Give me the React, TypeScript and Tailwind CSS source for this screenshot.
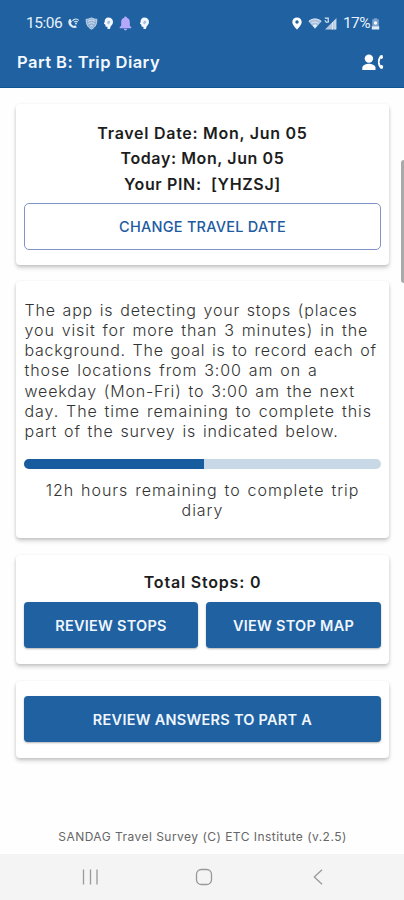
import React from "react";
import { clsx } from "clsx";

const introLines = [
  { text: "The app is detecting your stops (places", tracking: "tracking-[0.8px]" },
  { text: "you visit for more than 3 minutes) in the", tracking: "tracking-[0.91px]" },
  { text: "background. The goal is to record each of", tracking: "tracking-[0.74px]" },
  { text: "those locations from 3:00 am on a", tracking: "tracking-[0.92px]" },
  { text: "weekday (Mon-Fri) to 3:00 am the next", tracking: "tracking-[0.85px]" },
  { text: "day. The time remaining to complete this", tracking: "tracking-[0.93px]" },
  { text: "part of the survey is indicated below.", tracking: "tracking-[0.84px]" },
];

function CallIcon() {
  return (
    <svg width="13" height="13" viewBox="0 0 13 13" fill="none">
      <path
        d="M2.3 2.2C.7 4 1.1 7 3 9c2 2 5 2.5 7 1.3L8.3 8.3 6.9 9C5.5 8.5 4.5 7.5 4 6l.9-1.3L3.5 2z"
        fill="#dfebf9"
      />
      <path d="M5.5 3.8c1.8-2.4 5-2.3 6.2-.3M7.3 5.2c1-1.2 2.5-1.2 3.3-.1" stroke="#dfebf9" strokeWidth="1.1" />
      <circle cx="9" cy="6.5" r=".9" fill="#dfebf9" />
    </svg>
  );
}

function ShieldIcon() {
  return (
    <svg width="13" height="13" viewBox="0 0 13 13" fill="none" stroke="#c5d8ec">
      <path d="M6.5.8C8.5 2 10 2.3 11.8 2.2c.2 4.5-1.3 8-5.3 10-4-2-5.5-5.5-5.3-10C3 2.3 4.5 2 6.5.8Z" fill="#8fb0d4" />
      <path d="M3 4.5c2-1.5 5-1.5 7 0M3.5 7c2-1.8 4-1.8 6 0M5 9.3c1-1 2-1 3 0" strokeWidth="1.1" />
    </svg>
  );
}

function HeadIcon() {
  return (
    <svg width="11" height="13" viewBox="0 0 11 13">
      <path
        d="M5.3.6C8 .6 10 2.3 10 4.900c0 2-1 2.900-2.100 4L6.800 12H4.500l-.1-2.200H2.700L2.200 7.400.9 6.800l.7-1.900C1.600 2.300 3 .6 5.300.6Z"
        fill="#f4f9ff"
      />
      <path d="M4.300 4.800 5.800 3.400l1.600 1.200-.8 1.700-1.200 1.300L4.300 6.500z" fill="#a5c0de" />
    </svg>
  );
}

function BellIcon() {
  return (
    <svg width="13" height="15" viewBox="0 0 13 15" fill="#b4a8fb">
      <path d="M6.5.4c.9 0 1.4.6 1.4 1.4 2 .6 2.900 2.200 2.900 4.200v3.400l1.600 2v.9H.6v-.9l1.600-2V6c0-2 .9-3.600 2.900-4.200C5.100 1 5.600.4 6.500.4Z" />
      <path d="M4.800 12.800h3.400c-.2 1-.8 1.600-1.700 1.600s-1.500-.6-1.700-1.600Z" />
    </svg>
  );
}

function PinIcon() {
  return (
    <svg width="10" height="13" viewBox="0 0 10 13">
      <path
        d="M5 .4C2.300.4.3 2.400.3 5c0 3 4.700 7.600 4.700 7.600S9.700 8 9.700 5C9.700 2.400 7.700.4 5 .4Zm0 2.900a1.700 1.700 0 1 1 0 3.400 1.700 1.700 0 0 1 0-3.400Z"
        fill="#fff"
        fillRule="evenodd"
      />
    </svg>
  );
}

function WifiIcon() {
  return (
    <svg width="14" height="11" viewBox="0 0 14 11">
      <path d="M7 .4C4.200.4 1.900 1.500.3 3.200L7 10.800l6.700-7.600C12.100 1.500 9.800.4 7 .4Z" fill="#a9c0dd" />
      <path d="M1 3.300c3.500-3 8.500-3 12 0M3.300 5.400c2.200-1.900 5.200-1.900 7.400 0" stroke="#dbe7f5" strokeWidth="1" fill="none" />
      <path d="M7 6.600c-1 0-1.700.4-2.200 1L7 10.300l2.200-2.700c-.5-.6-1.200-1-2.200-1Z" fill="#e4eefa" />
    </svg>
  );
}

function SignalIcon() {
  return (
    <svg width="13" height="13" viewBox="0 0 13 13">
      <path d="M12.500 1v11.500H1z" fill="#b4c8e0" />
      <path d="M8.500 5v7.500M11 3v9.500" stroke="#d9e5f3" strokeWidth="1" />
      <path d="M.8 1.100h3.400v3.600M.8 3.400l1.700 1.900 2.600-.6" stroke="#d9e5f3" strokeWidth="1.2" fill="none" />
    </svg>
  );
}

function BatteryIcon() {
  return (
    <svg width="9" height="12" viewBox="0 0 9 12">
      <path d="M3 .3h3v1h1.800v7H1.200v-7H3z" fill="#7da2cc" />
      <circle cx="4.500" cy="5" r="1.700" fill="#f4f8fd" />
      <path d="M.8 8.200h7.400v3.300H.8z" fill="#e3edf8" />
    </svg>
  );
}

function ContactIcon() {
  return (
    <svg width="22" height="17" viewBox="0 0 22 17" fill="#fff">
      <circle cx="6.900" cy="4.600" r="4.200" />
      <path d="M.3 16.100v-2.300c0-2.800 4.400-4 6.600-4s6.600 1.200 6.600 4v2.300z" />
      <path d="M20.600 1.300 18.900 1c-1.900 1.600-3 4.100-3 6.900s1.100 5.400 3 7l1.900-.4.4-2.700-1.700-.9-1 .4a7 7 0 0 1 0-6.700l1 .4 1.600-.9z" />
    </svg>
  );
}

function StatusBar() {
  return (
    <div className="flex h-[47px] items-center pl-[26px] pr-[24px] font-['Roboto',sans-serif] text-[15.5px] text-[#e8f1fb]">
      <span className="w-[41px] tracking-[-0.5px]">15:06</span>
      <div className="flex items-center">
        <span className="w-[18px]"><CallIcon /></span>
        <span className="w-[18px]"><ShieldIcon /></span>
        <span className="w-[15.5px]"><HeadIcon /></span>
        <span className="w-5"><BellIcon /></span>
        <span><HeadIcon /></span>
      </div>
      <div className="ml-auto flex items-center">
        <span className="w-4"><PinIcon /></span>
        <span className="w-[15.5px]"><WifiIcon /></span>
        <span className="w-[19.5px]"><SignalIcon /></span>
        <span className="w-[28px] tracking-[-0.6px]">17%</span>
        <BatteryIcon />
      </div>
    </div>
  );
}

function Card({ className, children }: { className?: string; children: React.ReactNode }) {
  return (
    <section
      className={clsx(
        "rounded-[4px] bg-white px-2 shadow-[0_3px_4px_rgba(0,0,0,0.16),0_1px_3px_rgba(0,0,0,0.12)]",
        className,
      )}
    >
      {children}
    </section>
  );
}

function PrimaryButton({ className, children }: { className?: string; children: React.ReactNode }) {
  return (
    <button
      className={clsx(
        "h-[46px] rounded-[4px] bg-[#1f61a1] pt-[2px] text-[14.5px] font-semibold tracking-[0.26px] text-[#eff6ff] shadow-[0_1px_2px_rgba(0,0,0,0.3)]",
        className,
      )}
    >
      {children}
    </button>
  );
}

function NavBar() {
  return (
    <nav className="flex h-[46px] items-center bg-[#f4f4f4] pl-[82px]">
      <svg width="17" height="16" viewBox="0 0 17 16" stroke="#999" strokeWidth="1.3">
        <path d="M1.500.5v15M8.500.5v15M15 .5v15" />
      </svg>
      <svg className="ml-[96px]" width="18" height="18" viewBox="0 0 18 18" fill="none" stroke="#999" strokeWidth="1.3">
        <rect x="1.500" y="1.500" width="15" height="15" rx="4.800" />
      </svg>
      <svg className="ml-[100px]" width="10" height="16" viewBox="0 0 10 16" fill="none" stroke="#999" strokeWidth="1.3">
        <path d="M9 .7 1.300 8 9 15.300" />
      </svg>
    </nav>
  );
}

export default function App() {
  return (
    <div className="relative flex h-[900px] w-[404px] flex-col overflow-hidden bg-[#fefefe] font-['Inter',sans-serif]">
      <header className="h-[88px] shrink-0 border-b border-[#0d5590] bg-[#1f61a1]">
        <StatusBar />
        <div className="flex h-[30px] items-center justify-between pl-[17px] pr-[20px]">
          <h1 className="text-[16.5px] font-semibold tracking-[0.46px] text-[#f4f9ff]">Part B: Trip Diary</h1>
          <ContactIcon />
        </div>
      </header>

      <main className="flex flex-1 flex-col pl-4 pr-[15px] pt-4">
        <Card className="h-[161px] pt-[17px]">
          <div className="flex flex-col items-center whitespace-pre text-base font-semibold leading-[25.3px] text-[#1d1d1d]">
            <p className="tracking-[0.72px]">Travel Date: Mon, Jun 05</p>
            <p className="tracking-[0.6px]">Today: Mon, Jun 05</p>
            <p className="tracking-[0.65px]">{"Your PIN:  [YHZSJ]"}</p>
          </div>
          <button className="mt-[6px] h-[47px] w-full rounded-[5px] border border-[#7f94c4] pt-px text-[14.5px] font-medium tracking-[0.24px] text-[#205ba2]">
            CHANGE TRAVEL DATE
          </button>
        </Card>

        <Card className="mt-4 h-[257px] pt-[18.5px] text-base font-light leading-[20.3px] text-[#333] [word-spacing:1.5px]">
          <div className="whitespace-nowrap pl-[0.5px]">
            {introLines.map((line) => (
              <p key={line.text} className={line.tracking}>{line.text}</p>
            ))}
          </div>
          <div className="mt-[17.5px] h-[10px] overflow-hidden rounded-full bg-[#c8d8e6]">
            <div className="h-full w-[180px] bg-[#175c9f]" />
          </div>
          <p className="mt-[11px] text-center tracking-[0.98px]">
            12h hours remaining to complete trip
            <br />
            diary
          </p>
        </Card>

        <Card className="mt-[17px] h-[109px] pt-[15px]">
          <p className="text-center text-base font-semibold leading-6 tracking-[0.8px] text-[#1d1d1d]">
            Total Stops: 0
          </p>
          <div className="mt-2 flex gap-2">
            <PrimaryButton className="w-[174px]">REVIEW STOPS</PrimaryButton>
            <PrimaryButton className="flex-1">VIEW STOP MAP</PrimaryButton>
          </div>
        </Card>

        <Card className="mt-[17px] h-[77px] pt-[15px]">
          <PrimaryButton className="w-full">REVIEW ANSWERS TO PART A</PrimaryButton>
        </Card>

        <footer className="mt-auto pb-[9px] text-center text-[12px] leading-4 tracking-[0.47px] text-[#666]">
          SANDAG Travel Survey (C) ETC Institute (v.2.5)
        </footer>
      </main>

      <NavBar />
      <div className="absolute right-0 top-[160px] h-[123px] w-[3px] rounded-l-sm bg-[#a9a9a9]" />
    </div>
  );
}
